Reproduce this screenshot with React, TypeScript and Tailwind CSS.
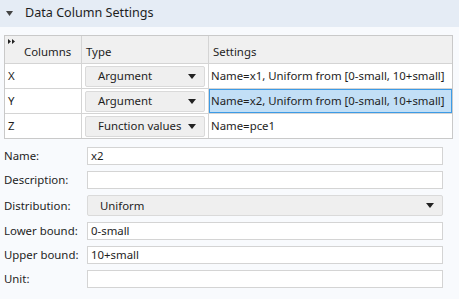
const font = { fontFamily: '"Segoe UI", "Noto Sans", "Open Sans", sans-serif' };

const rows = [
  { col: "X", type: "Argument", settings: "Name=x1, Uniform from [0-small, 10+small]", selected: false },
  { col: "Y", type: "Argument", settings: "Name=x2, Uniform from [0-small, 10+small]", selected: true },
  { col: "Z", type: "Function values", settings: "Name=pce1", selected: false },
];

const Caret = () => (
  <svg width="8" height="5" viewBox="0 0 8 5">
    <path d="M0 0h8L4 5z" fill="#222" />
  </svg>
);

const TextField = ({ value }: { value: string }) => (
  <div className="flex h-[18px] items-center border border-[#d4d4d4] bg-white px-[3px] text-[#1e1e1e]">
    {value}
  </div>
);

export default function App() {
  const fields: [string, string][] = [
    ["Name:", "x2"],
    ["Description:", ""],
  ];
  const bounds: [string, string][] = [
    ["Lower bound:", "0-small"],
    ["Upper bound:", "10+small"],
    ["Unit:", ""],
  ];
  return (
    <div
      className="h-[299px] w-[459px] overflow-hidden whitespace-nowrap bg-[#f8fafd] text-[11.4px] text-[#1e1e1e]"
      style={font}
    >
      <div className="flex h-[27px] items-center bg-[#e5ecf5] pl-[6px]">
        <svg width="7" height="5" viewBox="0 0 7 5" className="mr-[12px]">
          <path d="M0 0h7L3.5 5z" fill="#444" />
        </svg>
        <span className="text-[12.6px] text-[#1e1e1e]">Data Column Settings</span>
      </div>

      <div className="ml-[4px] mr-[6px] mt-[8px] border border-[#c9c9c9] bg-white">
        <div className="grid h-[27px] grid-cols-[77px_127px_1fr] bg-[#f0f0f0]">
          <div className="relative flex items-end border-r border-[#d4d4d4] pb-[3px] pl-[19px]">
            <svg width="7" height="5" viewBox="0 0 7 5" className="absolute left-[3px] top-[3px]">
              <path d="M0 0l3 2.5L0 5zM4 0l3 2.5L4 5z" fill="#222" />
            </svg>
            Columns
          </div>
          <div className="flex items-end border-r border-[#d4d4d4] pb-[3px] pl-[4px]">Type</div>
          <div className="flex items-end pb-[3px] pl-[4px]">Settings</div>
        </div>
        {rows.map((r) => (
          <div key={r.col} className="grid h-[25px] grid-cols-[77px_127px_1fr] border-t border-[#d4d4d4]">
            <div className="flex items-center border-r border-[#d4d4d4] pl-[3px]">{r.col}</div>
            <div className="flex items-center border-r border-[#d4d4d4] px-[3px]">
              <div className="flex h-[21px] w-full items-center justify-between rounded-[2px] border border-[#dadada] bg-[#efefef] pl-[12px] pr-[8px]">
                <span>{r.type}</span>
                <Caret />
              </div>
            </div>
            <div
              className={
                r.selected
                  ? "flex items-center overflow-hidden border border-[#3c9be6] bg-[#c2dff6] pl-[1px]"
                  : "flex items-center overflow-hidden pl-[2px]"
              }
            >
              {r.settings}
            </div>
          </div>
        ))}
      </div>

      <div className="mt-[8px] flex flex-col gap-[6px] pl-[4px] pr-[16px]">
        {fields.map(([l, v]) => (
          <div key={l} className="grid grid-cols-[83px_1fr] items-center">
            <span>{l}</span>
            <TextField value={v} />
          </div>
        ))}
        <div className="grid grid-cols-[83px_1fr] items-center">
          <span>Distribution:</span>
          <div className="flex h-[21px] items-center justify-between rounded-[2px] border border-[#dadada] bg-[#efefef] pl-[12px] pr-[8px]">
            <span>Uniform</span>
            <Caret />
          </div>
        </div>
        {bounds.map(([l, v]) => (
          <div key={l} className="grid grid-cols-[83px_1fr] items-center">
            <span>{l}</span>
            <TextField value={v} />
          </div>
        ))}
      </div>
    </div>
  );
}
